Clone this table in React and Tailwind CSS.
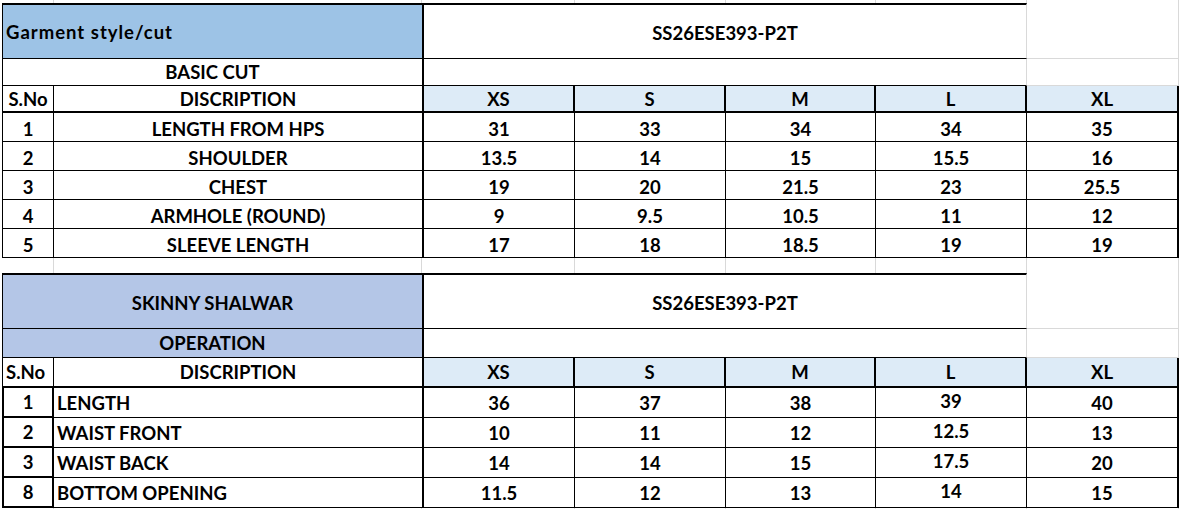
import React from 'react';

const sizes = ['XS', 'S', 'M', 'L', 'XL'];

const basicCut = [
  ['1', 'LENGTH FROM HPS', '31', '33', '34', '34', '35'],
  ['2', 'SHOULDER', '13.5', '14', '15', '15.5', '16'],
  ['3', 'CHEST', '19', '20', '21.5', '23', '25.5'],
  ['4', 'ARMHOLE (ROUND)', '9', '9.5', '10.5', '11', '12'],
  ['5', 'SLEEVE LENGTH', '17', '18', '18.5', '19', '19'],
];

const shalwar = [
  ['1', 'LENGTH', '36', '37', '38', '39', '40'],
  ['2', 'WAIST FRONT', '10', '11', '12', '12.5', '13'],
  ['3', 'WAIST BACK', '14', '14', '15', '17.5', '20'],
  ['8', 'BOTTOM OPENING', '11.5', '12', '13', '14', '15'],
];

// spreadsheet column widths: gutter, A, B, C..G, rest
const cols = 'grid grid-cols-[2px_52px_368px_153px_151px_150px_151px_152px_5px]';
const cell = 'flex items-end justify-center border-black';
const grid = 'border-[#d9d9d9]';

// the size columns, C to G
const sizeCell = (i) =>
  i === 0
    ? 'border-l-2 border-r border-b'
    : i === 4
    ? 'border-r-2 border-b'
    : 'border-r border-b';

const GapRow = ({ h }) => (
  <div className={`${cols} ${h}`}>
    <div />
    <div className={`border-r ${grid}`} />
    <div className={`border-r ${grid}`} />
    <div className={`border-r ${grid}`} />
    <div className={`border-r ${grid}`} />
    <div className={`border-r ${grid}`} />
    <div className={`border-r ${grid}`} />
    <div className={`border-r ${grid}`} />
    <div />
  </div>
);

const TitleRow = ({ title, bg }) => (
  <div className={`${cols} h-[56px]`}>
    <div />
    <div className={`col-span-2 flex items-center border-t-2 border-l border-b border-black ${bg} ${title.left ? 'pl-[3px] tracking-[1px]' : 'justify-center pt-[2px]'}`}>
      {title.text}
    </div>
    <div className="col-span-4 flex items-center justify-center pt-[2px] border-t-2 border-l-2 border-b border-black border-r border-r-[#d9d9d9]">
      SS26ESE393-P2T
    </div>
    <div className={`border-r border-b ${grid}`} />
    <div />
  </div>
);

const SubRow = ({ text, bg, h }) => (
  <div className={`${cols} ${h}`}>
    <div />
    <div className={`col-span-2 flex items-center justify-center border-l border-b border-black ${bg}`}>{text}</div>
    <div className="col-span-4 border-l-2 border-b border-black border-r border-r-[#d9d9d9]" />
    <div className={`border-r border-b ${grid}`} />
    <div />
  </div>
);

const HeaderRow = ({ h, pb, snoLeft }) => (
  <div className={`${cols} ${h}`}>
    <div />
    <div className={`${cell} ${pb} border-l border-r border-b-2 ${snoLeft ? 'justify-start pl-[3px]' : ''}`}>S.No</div>
    <div className={`${cell} ${pb} border-b-2`}>DISCRIPTION</div>
    {sizes.map((s, i) => (
      <div
        key={s}
        className={`${cell} ${pb} bg-[#ddebf7] border-b-2 ${i === 0 ? 'border-l-2 border-r-2' : 'border-r-2'}`}
      >
        {s}
      </div>
    ))}
    <div />
  </div>
);

const DataRow = ({ row, h, lower }) => {
  const pb = lower ? 'pb-[4px]' : 'pb-[2px]';
  return (
    <div className={`${cols} ${h}`}>
      <div />
      <div className={`${cell} ${pb} ${lower ? 'border-l-2 border-r-2 border-b-2' : 'border-l border-r border-b'}`}>{row[0]}</div>
      <div className={`${cell} ${pb} border-b ${lower ? 'justify-start pl-[3px]' : ''}`}>{row[1]}</div>
      {row.slice(2).map((v, i) => (
        <div key={i} className={`${cell} ${sizeCell(i)} ${lower && i === 3 ? 'pb-[6px]' : pb}`}>
          {v}
        </div>
      ))}
      <div />
    </div>
  );
};

export default function App() {
  return (
    <div className="w-[1184px] h-[509px] overflow-hidden bg-white text-black text-[18.5px] font-bold leading-[20px] font-[Lato,'Liberation_Sans',sans-serif]">
      <GapRow h="h-[3px]" />
      <TitleRow title={{ text: 'Garment style/cut', left: true }} bg="bg-[#9dc3e6]" />
      <SubRow text="BASIC CUT" bg="bg-white" h="h-[27px]" />
      <HeaderRow h="h-[27px]" pb="pb-[2px]" />
      {basicCut.map((r) => (
        <DataRow key={r[1]} row={r} h="h-[29px]" />
      ))}
      <GapRow h="h-[15px]" />
      <TitleRow title={{ text: 'SKINNY SHALWAR' }} bg="bg-[#b4c6e7]" />
      <SubRow text="OPERATION" bg="bg-[#b4c6e7]" h="h-[29px]" />
      <HeaderRow h="h-[30px]" pb="pb-[4px]" snoLeft />
      {shalwar.map((r) => (
        <DataRow key={r[1]} row={r} h="h-[30px]" lower />
      ))}
      <GapRow h="h-[2px]" />
    </div>
  );
}
